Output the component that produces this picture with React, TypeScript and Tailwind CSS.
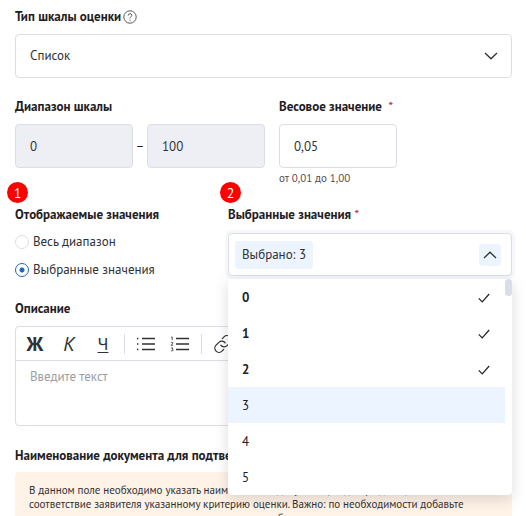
import { useState, type ReactNode } from "react";

const labelClass = "block text-[13px] leading-4 font-bold text-[#1f2023]";
const fieldClass =
  "h-11 w-full rounded border border-[#dcdee6] px-3.5 text-[13px] text-[#303134] outline-none";

function Star() {
  return <span className="font-normal text-[#d23c3c]">*</span>;
}

function Marker({ children }: { children: ReactNode }) {
  return (
    <span className="absolute -top-[25px] -left-2 flex size-[21px] items-center justify-center rounded-full bg-[#ff0000] text-sm leading-4 text-white">
      {children}
    </span>
  );
}

function Chevron({ up = false }: { up?: boolean }) {
  return (
    <svg viewBox="0 0 14 8" className="h-2 w-3.5" fill="none" stroke="#303134" strokeWidth="1.3">
      <path d={up ? "M1 7 7 1.2 13 7" : "M1 1 7 6.8 13 1"} />
    </svg>
  );
}

function ListIcon({ numbered = false }: { numbered?: boolean }) {
  return (
    <svg viewBox="0 0 20 16" className="h-4 w-5" fill="none" stroke="#303134" strokeWidth="1.4">
      <path d="M6 2.5h13M6 8h13M6 13.5h13" />
      {numbered ? (
        <path
          strokeWidth="0.8"
          d="M1.2 1.4 2.2.9v3.3M1.1 7.1q.1-.8.9-.8.9 0 .9.7 0 .6-1.8 2.3h2M1.1 12h1.9l-1 1q1 0 1 1t-1 1q-.8 0-1-.6"
        />
      ) : (
        <path d="M1 2.5h1.4M1 8h1.4M1 13.5h1.4" />
      )}
    </svg>
  );
}

function ToolButton({ label, children }: { label: string; children: ReactNode }) {
  return (
    <button
      type="button"
      aria-label={label}
      className="flex size-6 shrink-0 items-center justify-center text-xl leading-6 text-[#303134]"
    >
      {children}
    </button>
  );
}

function Dropdown() {
  const [selected, setSelected] = useState([0, 1, 2]);
  const toggle = (n: number) =>
    setSelected((s) => (s.includes(n) ? s.filter((v) => v !== n) : [...s, n]));
  return (
    <div className="absolute inset-x-0 top-full z-10 mt-[3px] flex overflow-hidden rounded-b bg-white shadow-[0_4px_14px_rgba(60,60,80,0.18)]">
      <div
        role="listbox"
        id="values-list"
        aria-multiselectable="true"
        aria-label="Выбранные значения"
        className="flex-1"
      >
        {[0, 1, 2, 3, 4, 5].map((n) => {
          const on = selected.includes(n);
          return (
            <button
              key={n}
              type="button"
              role="option"
              aria-selected={on}
              onClick={() => toggle(n)}
              className={`flex h-9 w-full items-center justify-between pt-px pr-[15px] pl-3.5 text-[13px] text-[#1f2023] ${
                on ? "font-bold" : ""
              } ${n === 3 ? "bg-[#ebf4ff]" : ""}`}
            >
              {n}
              {on && (
                <svg viewBox="0 0 12 10" className="h-2.5 w-3" fill="none" stroke="#1f2023" strokeWidth="1.2">
                  <path d="M.8 5.4 4.2 8.8 11.2 1" />
                </svg>
              )}
            </button>
          );
        })}
      </div>
      <div className="w-[7px]">
        <div className="h-[17px] rounded-full bg-[#dadce6]" />
      </div>
    </div>
  );
}

export default function App() {
  const [mode, setMode] = useState("selected");
  const modes = [
    { id: "all", text: "Весь диапазон" },
    { id: "selected", text: "Выбранные значения" },
  ];
  return (
    <main className="h-screen overflow-hidden bg-white pt-[9px] pr-3.5 pl-[15px] font-['PT_Sans','Noto_Sans',sans-serif] text-[13px] text-[#303134]">
      <div className="flex items-center gap-0.5">
        <label htmlFor="scale" className={labelClass}>
          Тип шкалы оценки
        </label>
        <button type="button" aria-label="Подсказка">
          <svg viewBox="0 0 14 14" className="size-3.5" fill="none" stroke="#55585f">
            <circle cx="7" cy="7" r="6.2" />
            <path d="M5.2 5.6q0-1.9 1.8-1.9t1.8 1.6q0 .9-.9 1.5T7 8.4M7 9.6v1.1" />
          </svg>
        </button>
      </div>
      <div className="relative mt-[9px]">
        <select id="scale" className={`${fieldClass} appearance-none bg-white`}>
          <option>Список</option>
        </select>
        <span className="pointer-events-none absolute inset-y-0 right-3.5 flex items-center">
          <Chevron />
        </span>
      </div>

      <div className="mt-[21px] flex gap-3.5">
        <fieldset className="w-[250px]">
          <legend className={labelClass}>Диапазон шкалы</legend>
          <div className="mt-[9px] flex items-center justify-between">
            <input aria-label="От" defaultValue="0" disabled className={`${fieldClass} max-w-[118px] bg-[#eeeff4]`} />
            <span className="text-[#1f2023]">–</span>
            <input aria-label="До" defaultValue="100" disabled className={`${fieldClass} max-w-[118px] bg-[#eeeff4]`} />
          </div>
        </fieldset>
        <div className="w-[118px]">
          <label htmlFor="weight" className={`${labelClass} whitespace-nowrap`}>
            Весовое значение&nbsp; <Star />
          </label>
          <input id="weight" defaultValue="0,05" className={`${fieldClass} mt-[9px]`} />
          <p className="mt-0.5 text-[11px] leading-4 text-[#4b4d54]">от 0,01 до 1,00</p>
        </div>
      </div>

      <div className="mt-[21px] grid grid-cols-[3fr_4fr]">
        <div className="relative">
          <Marker>1</Marker>
          <fieldset>
            <legend className={labelClass}>Отображаемые значения</legend>
            <div className="mt-[11px] flex flex-col gap-3">
              {modes.map((m) => (
                <label key={m.id} className="flex items-center gap-1 leading-4">
                  <input
                    type="radio"
                    name="mode"
                    checked={mode === m.id}
                    onChange={() => setMode(m.id)}
                    className="size-3.5 appearance-none rounded-full border border-[#dcdee6] bg-white checked:border-[#2267b5] checked:bg-[radial-gradient(circle,#2267b5_2px,#ffffff_3px)]"
                  />
                  {m.text}
                </label>
              ))}
            </div>
          </fieldset>
        </div>
        <div className="relative">
          <Marker>2</Marker>
          <label htmlFor="values" className={labelClass}>
            Выбранные значения <Star />
          </label>
          <div className="relative mt-2.5">
            <button
              id="values"
              type="button"
              aria-haspopup="listbox"
              aria-expanded="true"
              aria-controls="values-list"
              className="flex h-[43px] w-full items-center justify-between rounded border border-[#dcdee6] bg-white pr-2.5 pl-1.5 shadow-[0_0_0_3px_#f6f7fb]"
            >
              <span className="rounded bg-[#ebf4ff] px-[7px] py-1.5 leading-4">Выбрано: 3</span>
              <span className="flex size-[22px] items-center justify-center rounded bg-[#ebf4ff]">
                <Chevron up />
              </span>
            </button>
            <Dropdown />
          </div>
        </div>
      </div>

      <label htmlFor="description" className={`${labelClass} mt-[23px]`}>
        Описание
      </label>
      <div className="mt-[9px] rounded border border-[#dcdee6]">
        <div className="flex h-[34px] items-center gap-[9px] border-b border-[#dcdee6] pl-[7px]">
          <div className="flex gap-2.5">
            <ToolButton label="Полужирный">
              <b>Ж</b>
            </ToolButton>
            <ToolButton label="Курсив">
              <i>К</i>
            </ToolButton>
            <ToolButton label="Подчёркнутый">
              <u className="text-lg decoration-1 underline-offset-2">Ч</u>
            </ToolButton>
          </div>
          <div className="h-5 w-px bg-[#dcdee6]" />
          <div className="flex gap-2.5">
            <ToolButton label="Маркированный список">
              <ListIcon />
            </ToolButton>
            <ToolButton label="Нумерованный список">
              <ListIcon numbered />
            </ToolButton>
          </div>
          <div className="h-5 w-px bg-[#dcdee6]" />
          <ToolButton label="Ссылка">
            <svg viewBox="0 0 24 24" className="size-5" fill="none" stroke="#303134" strokeWidth="1.5" strokeLinecap="round">
              <path d="M9.5 13.5a5 5 0 0 0 7.4.5l3.4-3.4a5 5 0 0 0-7.1-7.1l-2 2" />
              <path d="M14.5 10.5a5 5 0 0 0-7.4-.5l-3.4 3.4a5 5 0 0 0 7.1 7.1l2-2" />
            </svg>
          </ToolButton>
        </div>
        <textarea
          id="description"
          placeholder="Введите текст"
          className="block h-16 w-full resize-none px-3.5 py-2 leading-4 outline-none placeholder:text-[#9b9da3]"
        />
      </div>

      <h2 className={`${labelClass} mt-[22px]`}>Наименование документа для подтверждения</h2>
      <p className="mt-2 rounded bg-[#fff2e6] px-3.5 py-[11px] text-[11px] leading-3.5 text-[#303134]">
        В данном поле необходимо указать наименование документа, подтверждающего
        <br />
        соответствие заявителя указанному критерию оценки. Важно: по необходимости добавьте
        <br />
        названия иных документов, которые заявителю необходимо приложить
      </p>
    </main>
  );
}
